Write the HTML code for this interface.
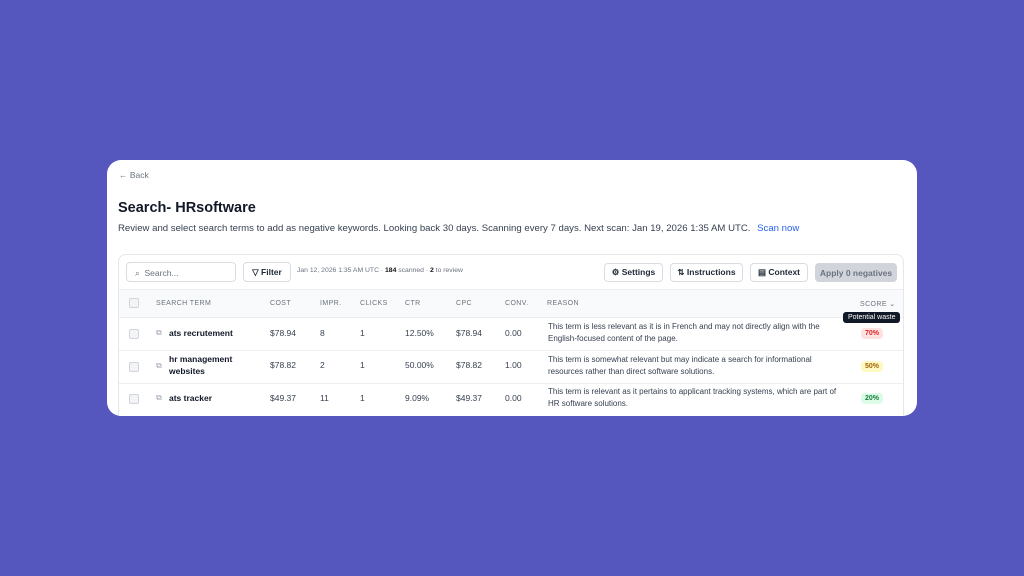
<!DOCTYPE html>
<html><head><style>
*{margin:0;padding:0;box-sizing:border-box}
body{width:1024px;height:576px;background:#5557bf;font-family:"Liberation Sans",sans-serif;position:relative;overflow:hidden;color:#111827}
.a{position:absolute;white-space:nowrap}
.card{position:absolute;left:107px;top:160px;width:810px;height:256px;background:#fff;border-radius:14px;overflow:hidden}
.tbl{position:absolute;left:11px;top:94px;width:786px;height:170px;border:1px solid #e5e7eb;border-radius:8px;background:#fff}
.btn{position:absolute;top:8px;height:19px;border:1px solid #d9dce1;border-radius:4px;font-size:8.5px;color:#1f2937;display:flex;align-items:center;justify-content:center;gap:4px;background:#fff}
.h{font-size:7px;color:#6b7280;letter-spacing:.4px;top:45px}
.cb{width:10px;height:10px;border:1px solid #d1d5db;border-radius:2px;background:#f3f4f6;left:10px}
.c{font-size:8.5px;color:#374151}
.r{font-size:8px;color:#374151;line-height:11.5px;white-space:normal;width:300px;left:429px}
.line{position:absolute;left:0;right:0;height:1px;background:#eceef1}
.pill{position:absolute;font-size:7px;font-weight:bold;border-radius:4px;padding:2px 4px;left:742px}
</style></head><body>
<div class="card">
<div class="a" style="left:12px;top:10px;font-size:8.5px;color:#6b7280">← Back</div>
<div class="a" style="left:11px;top:40px;font-size:14.5px;font-weight:bold;color:#111827">Search- HRsoftware</div>
<div class="a" style="left:11px;top:63px;font-size:9.6px;color:#374151">Review and select search terms to add as negative keywords. Looking back 30 days. Scanning every 7 days. Next scan: Jan 19, 2026 1:35 AM UTC. <span style="color:#2563eb;margin-left:4px">Scan now</span></div>
<div class="tbl">
<div class="a" style="left:7px;top:7px;width:110px;height:20px;border:1px solid #d9dce1;border-radius:4px;font-size:8.5px;color:#6b7280;padding:5px 0 0 8px">⌕ &nbsp;Search...</div>
<div class="btn" style="left:124px;width:48px;height:20px;top:7px;font-weight:bold">▽ Filter</div>
<div class="a" style="left:178px;top:12px;font-size:6.8px;color:#6b7280">Jan 12, 2026 1:35 AM UTC · <b style="color:#111">184</b> scanned · <b style="color:#111">2</b> to review</div>
<div class="btn" style="left:485px;width:59px;font-weight:bold">⚙ Settings</div>
<div class="btn" style="left:551px;width:73px;font-weight:bold">⇅ Instructions</div>
<div class="btn" style="left:631px;width:58px;font-weight:bold">▤ Context</div>
<div class="btn" style="left:696px;width:82px;background:#d1d5db;border-color:#d1d5db;color:#6b7280;font-weight:bold">Apply 0 negatives</div>
<div class="line" style="top:34px"></div>
<div style="position:absolute;left:0;right:0;top:35px;height:27px;background:#f9fafb"></div>
<div class="a cb" style="top:43px"></div>
<div class="a h" style="left:37px">SEARCH TERM</div>
<div class="a h" style="left:151px">COST</div>
<div class="a h" style="left:201px">IMPR.</div>
<div class="a h" style="left:241px">CLICKS</div>
<div class="a h" style="left:286px">CTR</div>
<div class="a h" style="left:337px">CPC</div>
<div class="a h" style="left:386px">CONV.</div>
<div class="a h" style="left:428px">REASON</div>
<div class="a h" style="left:741px">SCORE ⌄</div>
<div class="line" style="top:62px"></div>
<div class="line" style="top:95px"></div>
<div class="line" style="top:128px"></div>

<div class="a cb" style="top:74px"></div>
<div class="a c" style="left:37px;top:73px;color:#9ca3af;font-size:8px">⧉</div>
<div class="a c" style="left:50px;top:73px;font-weight:bold;color:#111827">ats recrutement</div>
<div class="a c" style="left:151px;top:73px">$78.94</div><div class="a c" style="left:201px;top:73px">8</div><div class="a c" style="left:241px;top:73px">1</div><div class="a c" style="left:286px;top:73px">12.50%</div><div class="a c" style="left:337px;top:73px">$78.94</div><div class="a c" style="left:386px;top:73px">0.00</div>
<div class="a r" style="top:66px">This term is less relevant as it is in French and may not directly align with the English-focused content of the page.</div>
<div class="pill" style="top:73px;background:#fee2e2;color:#dc2626">70%</div>

<div class="a cb" style="top:107px"></div>
<div class="a c" style="left:37px;top:106px;color:#9ca3af;font-size:8px">⧉</div>
<div class="a c" style="left:50px;top:99px;font-weight:bold;color:#111827;white-space:normal;width:75px;line-height:11.5px">hr management websites</div>
<div class="a c" style="left:151px;top:105px">$78.82</div><div class="a c" style="left:201px;top:105px">2</div><div class="a c" style="left:241px;top:105px">1</div><div class="a c" style="left:286px;top:105px">50.00%</div><div class="a c" style="left:337px;top:105px">$78.82</div><div class="a c" style="left:386px;top:105px">1.00</div>
<div class="a r" style="top:99px">This term is somewhat relevant but may indicate a search for informational resources rather than direct software solutions.</div>
<div class="pill" style="top:106px;background:#fef9c3;color:#a16207">50%</div>

<div class="a cb" style="top:139px"></div>
<div class="a c" style="left:37px;top:138px;color:#9ca3af;font-size:8px">⧉</div>
<div class="a c" style="left:50px;top:138px;font-weight:bold;color:#111827">ats tracker</div>
<div class="a c" style="left:151px;top:138px">$49.37</div><div class="a c" style="left:201px;top:138px">11</div><div class="a c" style="left:241px;top:138px">1</div><div class="a c" style="left:286px;top:138px">9.09%</div><div class="a c" style="left:337px;top:138px">$49.37</div><div class="a c" style="left:386px;top:138px">0.00</div>
<div class="a r" style="top:131px">This term is relevant as it pertains to applicant tracking systems, which are part of HR software solutions.</div>
<div class="pill" style="top:138px;background:#dcfce7;color:#15803d">20%</div>

<div class="a" style="left:724px;top:57px;background:#111827;color:#fff;font-size:7px;padding:2px 5px;border-radius:3px">Potential waste</div>
</div>
</div>
</body></html>
